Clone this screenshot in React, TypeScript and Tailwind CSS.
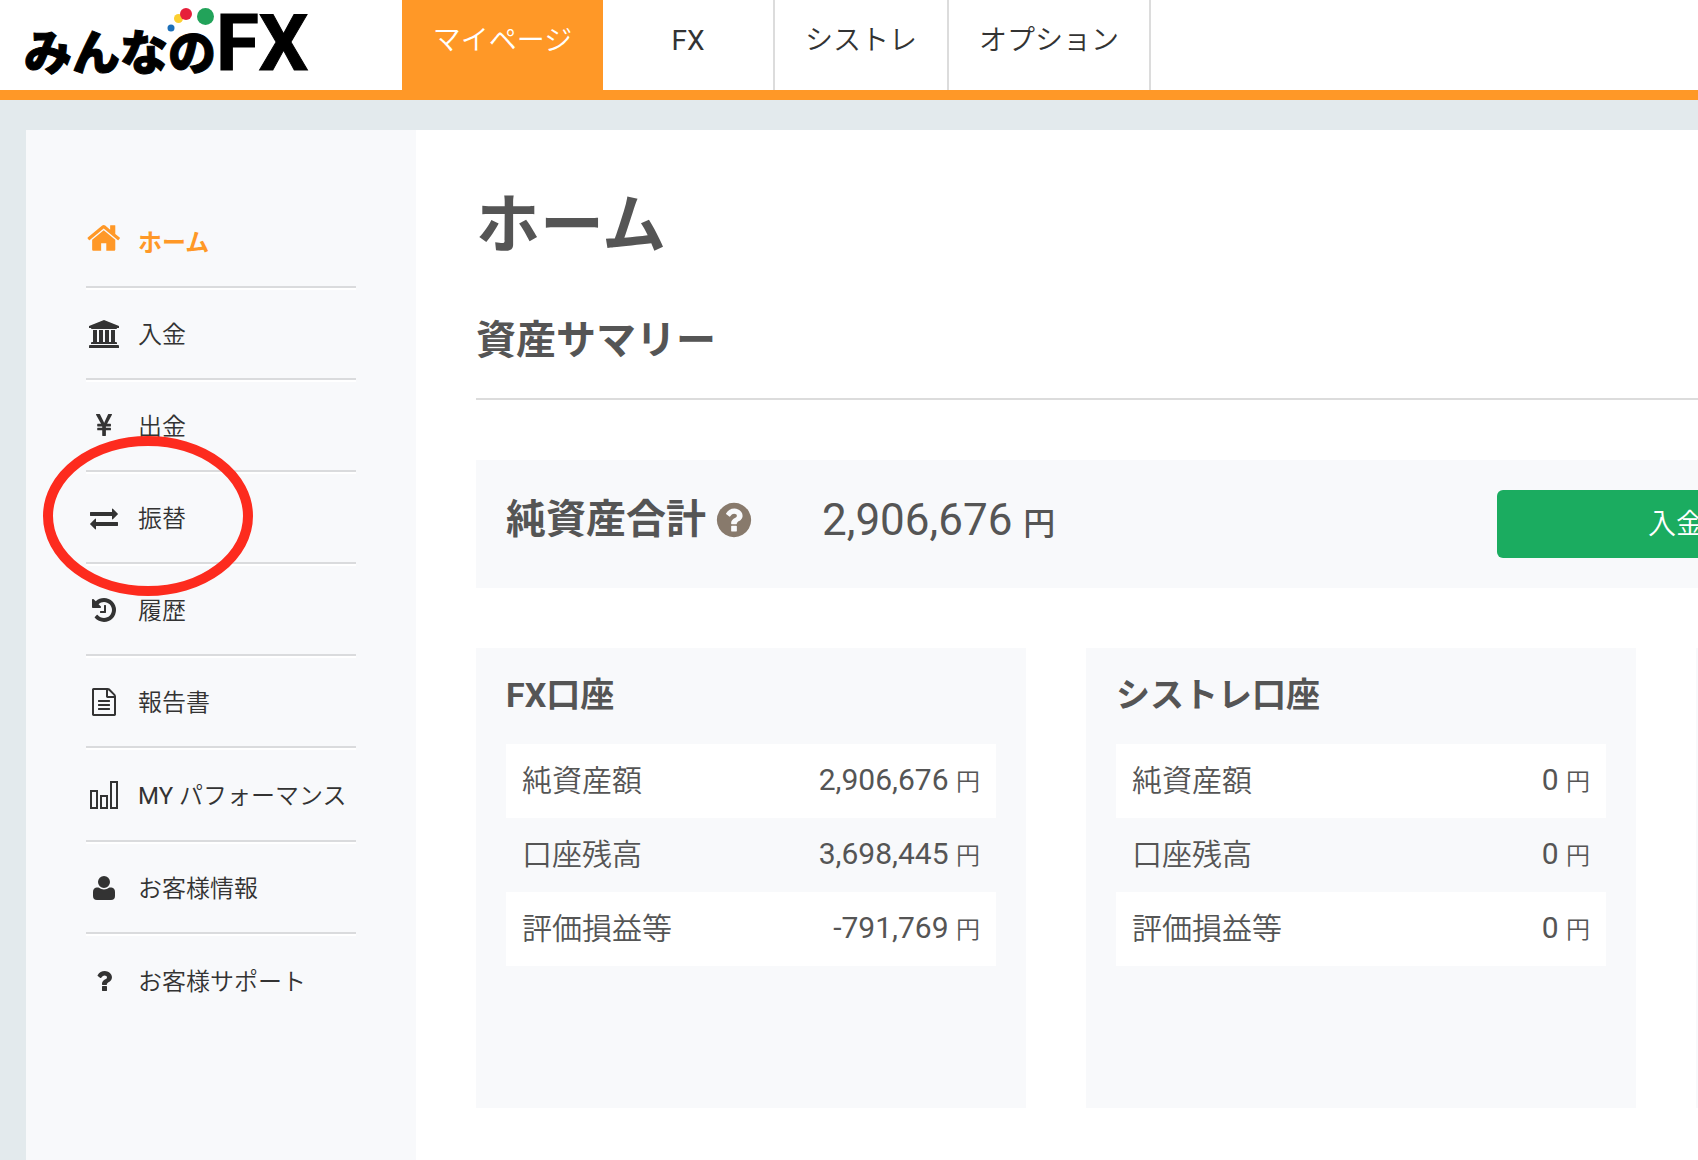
import * as React from "react"
import clsx from "clsx"

interface IconProps {
  d: string
  size?: string
  viewBox?: string
}

const Icon = ({ d, size = "h-7 w-7", viewBox = "0 0 1792 1792" }: IconProps) => (
  <svg className={clsx("shrink-0", size)} viewBox={viewBox} fill="currentColor" aria-hidden="true">
    <path d={d} />
  </svg>
)

const paths = {
  home: "M1408 992v480q0 26-19 45t-45 19h-384v-384h-256v384h-384q-26 0-45-19t-19-45v-480q0-1 .5-3t.5-3l575-474 575 474q1 2 1 6zm223-69l-62 74q-8 9-21 11h-3q-13 0-21-7l-692-577-692 577q-12 8-24 7-13-2-21-11l-62-74q-8-10-7-23.5t11-21.5l719-599q32-26 76-26t76 26l244 204v-195q0-14 9-23t23-9h192q14 0 23 9t9 23v408l219 182q10 8 11 21.5t-7 23.5z",
  bank: "M960 0l960 384v128h-128q0 26-20.5 45t-48.5 19h-1526q-28 0-48.5-19t-20.5-45h-128v-128zm-704 640h256v768h128v-768h256v768h128v-768h256v768h128v-768h256v768h59q28 0 48.5 19t20.5 45v64h-1664v-64q0-26 20.5-45t48.5-19h59v-768zm1595 960q28 0 48.5 19t20.5 45v128h-1920v-128q0-26 20.5-45t48.5-19h1782z",
  yen: "M985.5 1536h-172q-13 0-22.5-9t-9.5-23v-330h-288q-13 0-22.5-9t-9.5-23v-103q0-13 9.5-22.5t22.5-9.5h288v-85h-288q-13 0-22.5-9t-9.5-23v-104q0-13 9.5-22.5t22.5-9.5h214l-321-578q-8-16 0-32 10-16 28-16h194q19 0 29 18l215 425q19 38 56 125 10-24 30.5-68t27.5-61l191-420q8-19 29-19h191q17 0 27 16 9 14 1 31l-313 579h215q13 0 22.5 9.5t9.5 22.5v104q0 14-9.5 23t-22.5 9h-290v85h290q13 0 22.5 9.5t9.5 22.5v103q0 14-9.5 23t-22.5 9h-290v330q0 13-9.5 22.5t-22.5 9.5z",
  exchange: "M1792 1184v192q0 13-9.5 22.5t-22.5 9.5h-1376v192q0 13-9.5 22.5t-22.5 9.5q-12 0-24-10l-319-320q-9-9-9-22 0-14 9-23l320-320q9-9 23-9 13 0 22.5 9.5t9.5 22.5v192h1376q13 0 22.5 9.5t9.5 22.5zm0-544q0 14-9 23l-320 320q-9 9-23 9-13 0-22.5-9.5t-9.5-22.5v-192h-1376q-13 0-22.5-9.5t-9.5-22.5v-192q0-13 9.5-22.5t22.5-9.5h1376v-192q0-14 9-23t23-9q12 0 24 10l319 319q9 9 9 23z",
  history: "M1664 896q0 156-61 298t-164 245-245 164-298 61q-172 0-327-72.5t-264-204.5q-7-10-6.5-22.5t8.5-20.5l137-138q10-9 25-9 16 2 23 12 73 95 179 147t225 52q104 0 198.5-40.5t163.5-109.5 109.5-163.5 40.5-198.5-40.5-198.5-109.5-163.5-163.5-109.5-198.5-40.5q-98 0-188 35.5t-160 101.5l137 138q31 30 14 69-17 40-59 40h-448q-26 0-45-19t-19-45v-448q0-42 40-59 39-17 69 14l130 129q107-101 244.5-156.5t284.5-55.5q156 0 298 61t245 164 164 245 61 298zm-640-288v448q0 14-9 23t-23 9h-320q-14 0-23-9t-9-23v-64q0-14 9-23t23-9h224v-352q0-14 9-23t23-9h64q14 0 23 9t9 23z",
  file: "M1596 380q28 28 48 76t20 88v1152q0 40-28 68t-68 28h-1344q-40 0-68-28t-28-68v-1600q0-40 28-68t68-28h896q40 0 88 20t76 48zm-444-244v376h376q-10-29-22-41l-313-313q-12-12-41-22zm384 1528v-1024h-416q-40 0-68-28t-28-68v-416h-768v1536h1280zm-1024-864q0-14 9-23t23-9h704q14 0 23 9t9 23v64q0 14-9 23t-23 9h-704q-14 0-23-9t-9-23v-64zm736 224q14 0 23 9t9 23v64q0 14-9 23t-23 9h-704q-14 0-23-9t-9-23v-64q0-14 9-23t23-9h704zm0 256q14 0 23 9t9 23v64q0 14-9 23t-23 9h-704q-14 0-23-9t-9-23v-64q0-14 9-23t23-9h704z",
  user: "M11 0a6 6 0 0 1 0 12a6 6 0 0 1 0-12zM3.5 11.5H5.5Q11 15.5 16.5 11.5H18.5Q22 12 22 16V20Q22 24 18 24H4Q0 24 0 20V16Q0 12 3.5 11.5Z",
  question: "M1088 1256v240q0 16-12 28t-28 12h-240q-16 0-28-12t-12-28v-240q0-16 12-28t28-12h240q16 0 28 12t12 28zm316-600q0 54-15.5 101t-35 76.5-55 59.5-57.5 43.5-61 35.5q-41 23-68.5 65t-27.5 67q0 17-12 32.5t-28 15.5h-240q-15 0-25.5-18.5t-10.5-37.5v-45q0-83 65-156.5t143-108.5q59-27 84-56t25-76q0-42-46.5-74t-107.5-32q-65 0-108 29-35 25-107 115-13 16-31 16-12 0-25-8l-164-125q-13-10-15.5-25t5.5-28q160-266 464-266 80 0 161 31t146 83 106 127.5 41 158.5z",
  questionCircle: "M1024 1376v-192q0-14-9-23t-23-9h-192q-14 0-23 9t-9 23v192q0 14 9 23t23 9h192q14 0 23-9t9-23zm256-672q0-88-55.5-163t-138.5-116-170-41q-243 0-371 213-15 24 8 42l132 100q7 6 19 6 16 0 25-12 53-68 86-92 34-24 86-24 48 0 85.5 26t37.5 59q0 38-20 61t-68 45q-63 28-115.5 86.5t-52.5 125.5v36q0 14 9 23t23 9h192q14 0 23-9t9-23q0-19 21.5-49.5t54.5-49.5q32-18 49-28.5t46-35 44.5-48 28-60.5 12.5-81zm384 192q0 209-103 385.5t-279.5 279.5-385.5 103-385.5-103-279.5-279.5-103-385.5 103-385.5 279.5-279.5 385.5-103 385.5 103 279.5 279.5 103 385.5z",
}

const BarsIcon = () => (
  <svg className="h-7 w-7 shrink-0" viewBox="0 0 28 28" fill="none" stroke="currentColor" strokeWidth="2" aria-hidden="true">
    <rect x="1" y="10" width="6" height="17" />
    <rect x="11" y="15" width="6" height="12" />
    <rect x="21" y="1" width="6" height="26" />
  </svg>
)

const tabs = [
  { label: "マイページ", className: "w-[201px] bg-[#ff9827] font-[350] text-white" },
  { label: "FX", className: "w-[172px] border-r-2 border-[#dcdcdc]" },
  { label: "シストレ", className: "border-r-2 border-[#dcdcdc] px-[30px] font-[350]" },
  { label: "オプション", className: "border-r-2 border-[#dcdcdc] px-[30px] font-[350]" },
]

const menu = [
  { label: "ホーム", icon: <Icon d={paths.home} size="h-9 w-9" viewBox="-50 200 1792 1792" />, active: true },
  { label: "入金", icon: <Icon d={paths.bank} size="h-7 w-[30px]" viewBox="0 0 1920 1792" /> },
  { label: "出金", icon: <Icon d={paths.yen} /> },
  { label: "振替", icon: <Icon d={paths.exchange} />, marked: true },
  { label: "履歴", icon: <Icon d={paths.history} /> },
  { label: "報告書", icon: <Icon d={paths.file} /> },
  { prefix: "MY ", label: "パフォーマンス", icon: <BarsIcon />, tall: true },
  { label: "お客様情報", icon: <Icon d={paths.user} size="h-6 w-[22px]" viewBox="0 0 22 24" /> },
  { label: "お客様サポート", icon: <Icon d={paths.question} /> },
]

const accounts = [
  { title: "FX口座", values: ["2,906,676", "3,698,445", "-791,769"] },
  { title: "シストレ口座", values: ["0", "0", "0"] },
]

const rowLabels = ["純資産額", "口座残高", "評価損益等"]

const Logo = () => (
  <a href="#" aria-label="みんなのFX" className="relative flex h-[90px] w-[402px] shrink-0 items-baseline pl-6 text-black [-webkit-text-stroke:1px_black]">
    <span className="text-[48px] leading-[88px] font-black">みんなの</span>
    <span className="text-[78px] leading-[88px] font-bold">FX</span>
    <svg className="absolute top-0 left-[160px] h-8 w-14" viewBox="0 0 56 32" aria-hidden="true">
      <circle cx="11" cy="28" r="3.5" fill="#1c6fb8" />
      <circle cx="18.5" cy="18.5" r="4.5" fill="#fccf30" />
      <circle cx="26" cy="14" r="6" fill="#e61f3a" />
      <circle cx="45.5" cy="16.5" r="8.5" fill="#22a35a" />
    </svg>
  </a>
)

const Header = () => (
  <header className="flex h-[100px] border-b-10 border-[#ff9827] bg-white">
    <Logo />
    <nav className="flex text-[28px] leading-[81px]">
      {tabs.map((tab) => (
        <a key={tab.label} href="#" className={clsx("block text-center", tab.className)}>
          {tab.label}
        </a>
      ))}
    </nav>
  </header>
)

const Sidebar = () => (
  <aside className="w-[390px] shrink-0 bg-[#f8f9fb] px-[60px] pt-[66px]">
    <ul>
      {menu.map((item) => (
        <li
          key={item.label}
          className={clsx(
            "relative border-b-2 border-[#dadbdd] pt-0.5 shadow-[0_2px_0_#fff] last:border-b-0 last:shadow-none",
            item.tall ? "h-[94px]" : "h-[92px]"
          )}
        >
          <a
            href="#"
            className={clsx(
              "flex h-full items-center gap-4 text-2xl whitespace-nowrap",
              item.active ? "font-bold text-[#ff9827]" : "font-[350]"
            )}
          >
            <span className="flex w-9 shrink-0 justify-center">{item.icon}</span>
            <span className="pt-0.5">
              {item.prefix && <span className="font-normal">{item.prefix}</span>}
              {item.label}
            </span>
          </a>
          {item.marked && (
            <svg className="pointer-events-none absolute -top-[36px] -left-[43px] z-10 h-40 w-[210px]" viewBox="0 0 210 160" aria-hidden="true">
              <ellipse cx="105" cy="80" rx="100" ry="75" fill="none" stroke="#fd2b1e" strokeWidth="10" />
            </svg>
          )}
        </li>
      ))}
    </ul>
  </aside>
)

const AccountCard = ({ title, values }: { title: string; values: string[] }) => (
  <section className="min-h-[460px] bg-[#f8f9fb] px-[30px] pt-[22px]">
    <h3 className="text-[34px] leading-[50px] font-bold">{title}</h3>
    <table className="mt-6 w-full">
      <tbody>
        {values.map((value, i) => (
          <tr key={rowLabels[i]} className="h-[74px] odd:bg-white">
            <th scope="row" className="pb-0.5 pl-4 text-left text-[30px] font-[350]">
              {rowLabels[i]}
            </th>
            <td className="pr-4 pb-1 text-right text-[30px]">
              {value} <span className="text-2xl font-[350]">円</span>
            </td>
          </tr>
        ))}
      </tbody>
    </table>
  </section>
)

export default function App() {
  return (
    <div className="flex min-h-screen flex-col overflow-hidden bg-[#e3eaed] font-[Roboto,'Noto_Sans_CJK_JP',sans-serif] text-[#333]">
      <Header />
      <div className="flex flex-1 pt-[30px] pl-[26px]">
        <Sidebar />
        <main className="min-w-0 flex-1 bg-white pt-12 pl-[60px] text-[#555]">
          {/* the three account columns run past the right edge on narrow windows */}
          <div className="min-w-[1770px]">
            <h1 className="text-[64px] leading-[96px] font-bold">ホーム</h1>
            <h2 className="mt-[37px] border-b-2 border-[#dcdcdc] pb-[27px] text-[40px] leading-[60px] font-bold">資産サマリー</h2>

            <div className="mt-[60px] flex h-32 items-start justify-between bg-[#f8f9fb] px-[30px]">
              <div className="flex items-center pt-7 leading-[56px]">
                <span className="text-[40px] font-bold">純資産合計</span>
                <button type="button" aria-label="純資産合計について" className="ml-2 text-[#887a6c]">
                  <Icon d={paths.questionCircle} size="h-10 w-10" />
                </button>
                <span className="ml-[68px] pt-1 text-[44px]">
                  2,906,676 <span className="text-[32px] font-medium">円</span>
                </span>
              </div>
              <div className="w-[719px] pt-[30px]">
                <button type="button" className="h-[68px] w-[358px] rounded-md bg-[#1bac60] pt-0.5 text-[28px] font-[350] text-white">
                  入金
                </button>
              </div>
            </div>

            <div className="mt-[60px] grid grid-cols-3 gap-[60px]">
              {accounts.map((account) => (
                <AccountCard key={account.title} {...account} />
              ))}
              <section className="bg-[#f8f9fb]" />
            </div>
          </div>
        </main>
      </div>
    </div>
  )
}
